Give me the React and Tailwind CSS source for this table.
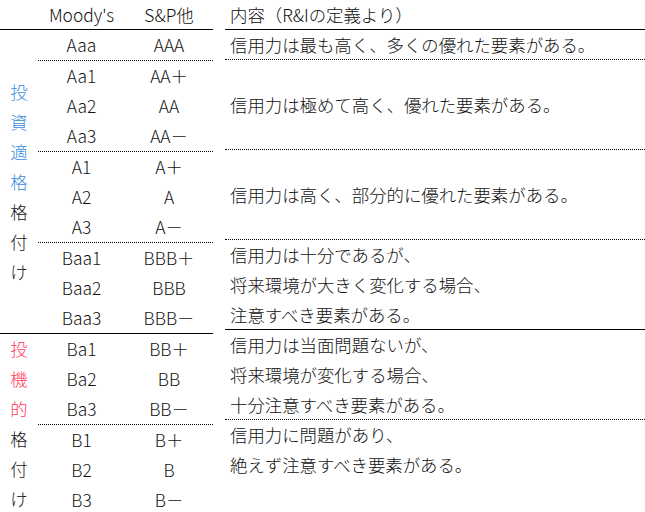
import React from "react";

const BLUE = "text-[#3a8ddd]";
const RED = "text-[#ff3b5c]";

const groups = [
  {
    label: [
      ["投", BLUE],
      ["資", BLUE],
      ["適", BLUE],
      ["格", BLUE],
      ["格", ""],
      ["付", ""],
      ["け", ""],
    ],
    center: true,
    blocks: [
      { rows: [["Aaa", "AAA"]], lines: ["信用力は最も高く、多くの優れた要素がある。"], middle: true },
      {
        rows: [["Aa1", "AA＋"], ["Aa2", "AA"], ["Aa3", "AA－"]],
        lines: ["信用力は極めて高く、優れた要素がある。"],
        middle: true,
      },
      {
        rows: [["A1", "A＋"], ["A2", "A"], ["A3", "A－"]],
        lines: ["信用力は高く、部分的に優れた要素がある。"],
        middle: true,
      },
      {
        rows: [["Baa1", "BBB＋"], ["Baa2", "BBB"], ["Baa3", "BBB－"]],
        lines: ["信用力は十分であるが、", "将来環境が大きく変化する場合、", "注意すべき要素がある。"],
      },
    ],
  },
  {
    label: [
      ["投", RED],
      ["機", RED],
      ["的", RED],
      ["格", ""],
      ["付", ""],
      ["け", ""],
    ],
    blocks: [
      {
        rows: [["Ba1", "BB＋"], ["Ba2", "BB"], ["Ba3", "BB－"]],
        lines: ["信用力は当面問題ないが、", "将来環境が変化する場合、", "十分注意すべき要素がある。"],
      },
      {
        rows: [["B1", "B＋"], ["B2", "B"], ["B3", "B－"]],
        lines: ["信用力に問題があり、", "絶えず注意すべき要素がある。"],
      },
    ],
  },
];

const App = () => {
  return (
    <div
      className="w-[645px] h-[512px] bg-white text-[#111] font-light text-[17.4px] leading-[30px] overflow-hidden"
      style={{ fontFamily: '"Noto Sans CJK JP", "Noto Sans", sans-serif' }}
    >
      <div className="flex">
        {/* left: labels + ratings */}
        <div className="w-[213px] shrink-0">
          <div className="h-[30px] flex border-b-[1.5px] border-black">
            <div className="w-[38px]" />
            <div className="w-[87px] text-center">Moody's</div>
            <div className="w-[88px] text-center">S&amp;P他</div>
          </div>
          {groups.map((g, gi) => (
            <div key={gi} className={`flex ${gi === 0 ? "border-b-[1.5px] border-black" : ""}`}>
              <div className={`w-[38px] flex flex-col items-center ${g.center ? "justify-center" : ""}`}>
                {g.label.map(([ch, c], i) => (
                  <div key={i} className={`h-[30px] ${c}`}>
                    {ch}
                  </div>
                ))}
              </div>
              <div className="flex-1">
                {g.blocks.map((b, bi) => (
                  <div
                    key={bi}
                    className={bi < g.blocks.length - 1 ? "border-b border-dotted border-black" : ""}
                  >
                    {b.rows.map(([m, s]) => (
                      <div key={m} className="h-[30px] flex">
                        <div className="w-[87px] text-center">{m}</div>
                        <div className="w-[88px] text-center">{s}</div>
                      </div>
                    ))}
                  </div>
                ))}
              </div>
            </div>
          ))}
        </div>

        {/* right: descriptions */}
        <div className="ml-[12px] flex-1">
          <div className="h-[30px] pl-[5px] border-b-[1.5px] border-black">内容（R&amp;Iの定義より）</div>
          {groups.map((g, gi) =>
            g.blocks.map((b, bi) => {
              const last = bi === g.blocks.length - 1;
              const border = last
                ? gi === 0
                  ? "border-b-[1.5px] border-black"
                  : ""
                : "border-b border-dotted border-black";
              return (
                <div
                  key={`${gi}-${bi}`}
                  className={`pl-[5px] flex flex-col ${b.middle ? "justify-center" : ""} ${border}`}
                  style={{ height: b.rows.length * 30 }}
                >
                  {b.lines.map((l) => (
                    <div key={l} className="h-[30px]">
                      {l}
                    </div>
                  ))}
                </div>
              );
            })
          )}
        </div>
      </div>
    </div>
  );
};

export default App;
